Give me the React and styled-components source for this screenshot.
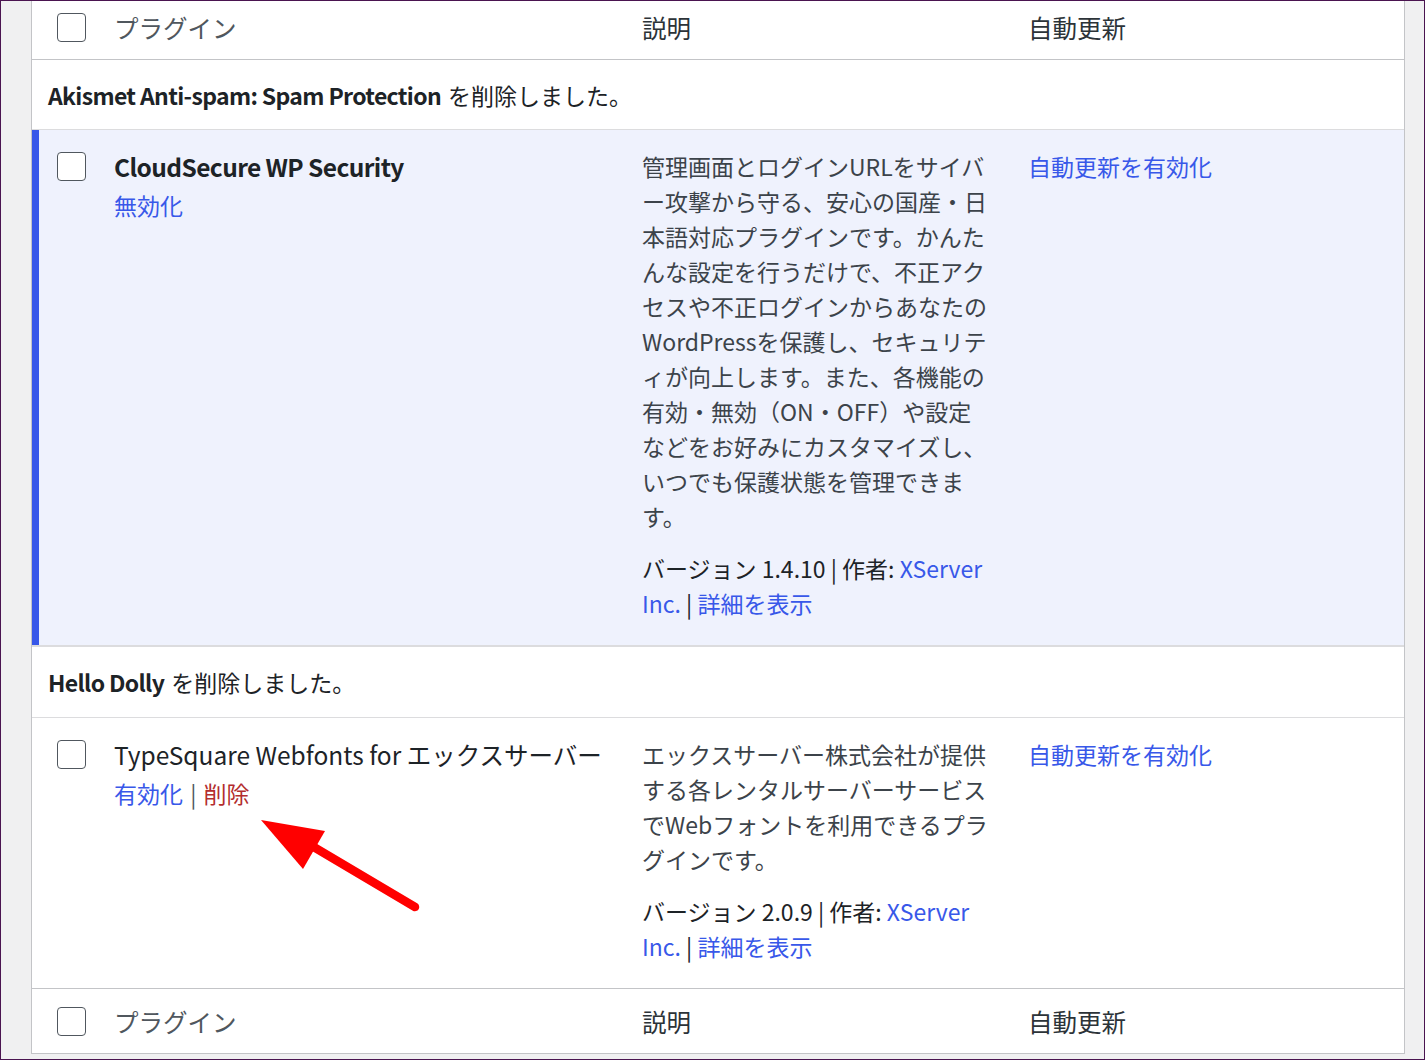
import styled, { createGlobalStyle } from 'styled-components';

const GlobalStyle = createGlobalStyle`
  html, body {
    margin: 0;
    padding: 0;
    background: #f0f0f1;
  }
  body {
    font-family: "Noto Sans CJK JP", "Noto Sans", sans-serif;
    color: #1d2327;
  }
`;

const Frame = styled.div`
  position: relative;
  box-sizing: border-box;
  width: 1425px;
  height: 1060px;
  border: 1px solid #4a1450;
  background: #f0f0f1;
  overflow: hidden;
  padding: 0 19px 0 30px;
`;

const Table = styled.div`
  background: #fff;
  border-left: 1px solid #c3c4c7;
  border-right: 1px solid #c3c4c7;
`;

const Row = styled.div`
  display: grid;
  grid-template-columns: 68px 528px 386px 1fr;
  background: ${(p) => (p.$active ? '#eff2fd' : '#fff')};
  border-bottom: ${(p) => p.$border || '1px solid #dcdcde'};
`;

const HeadRow = styled(Row)`
  box-sizing: border-box;
  height: ${(p) => p.$height}px;
  padding-bottom: ${(p) => p.$lift || 0}px;
  align-items: center;
`;

const CheckCell = styled.div`
  display: flex;
  align-items: ${(p) => (p.$top ? 'flex-start' : 'center')};
  padding-left: 25px;
  padding-top: ${(p) => p.$top || 0}px;
  box-shadow: ${(p) => (p.$active ? 'inset 7px 0 0 #3858e9' : 'none')};
`;

const Checkbox = styled.input.attrs({ type: 'checkbox' })`
  appearance: none;
  box-sizing: border-box;
  width: 29px;
  height: 29px;
  margin: 0;
  background: #fff;
  border: 1.5px solid #50575e;
  border-radius: 4px;
`;

const HeadCell = styled.div`
  padding-left: 14px;
  font-size: 24.5px;
  color: ${(p) => (p.$muted ? '#50575e' : '#2c3338')};
`;

const Cell = styled.div`
  padding: 19px 14px 24px;
  font-size: 23px;
  line-height: 35px;
`;

const Title = styled.div`
  font-size: 24.5px;
  font-weight: ${(p) => (p.$bold ? 700 : 400)};
  letter-spacing: ${(p) => (p.$bold ? '-0.6px' : '0')};
  color: #1d2327;
  white-space: nowrap;
`;

const Actions = styled.div`
  margin-top: 4px;
  color: #50575e;
`;

const Link = styled.span`
  color: ${(p) => (p.$danger ? '#b32d2e' : '#3858e9')};
`;

const Pipe = styled.span`
  margin: 0 ${(p) => p.$gap || 0}px;
`;

const Description = styled.div`
  color: #3c434a;
  white-space: nowrap;
  margin-bottom: 17px;
`;

const Meta = styled.div`
  color: #1d2327;
  white-space: nowrap;
`;

const NoticeRow = styled.div`
  height: ${(p) => p.$height}px;
  display: flex;
  align-items: center;
  padding-left: 16px;
  font-size: 23px;
  color: #1d2327;
  border-bottom: ${(p) => p.$border || '1px solid #dcdcde'};
  background: #fff;

  strong {
    font-weight: 700;
    letter-spacing: -0.65px;
    margin-right: 7px;
  }
`;

const Arrow = styled.svg`
  position: absolute;
  left: 0;
  top: 0;
  pointer-events: none;
`;

const Sep = ({ gap }) => <Pipe $gap={gap}> | </Pipe>;

const HeaderRow = ({ height, lift, border }) => (
  <HeadRow $height={height} $lift={lift} $border={border}>
    <CheckCell>
      <Checkbox />
    </CheckCell>
    <HeadCell $muted>プラグイン</HeadCell>
    <HeadCell>説明</HeadCell>
    <HeadCell>自動更新</HeadCell>
  </HeadRow>
);

const cloudSecureLines = [
  '管理画面とログインURLをサイバ',
  'ー攻撃から守る、安心の国産・日',
  '本語対応プラグインです。かんた',
  'んな設定を行うだけで、不正アク',
  'セスや不正ログインからあなたの',
  'WordPressを保護し、セキュリテ',
  'ィが向上します。また、各機能の',
  '有効・無効（ON・OFF）や設定',
  'などをお好みにカスタマイズし、',
  'いつでも保護状態を管理できま',
  'す。',
];

const typeSquareLines = [
  'エックスサーバー株式会社が提供',
  'する各レンタルサーバーサービス',
  'でWebフォントを利用できるプラ',
  'グインです。',
];

const PluginRow = ({ active, name, actions, lines, version, border }) => (
  <Row $active={active} $border={border}>
    <CheckCell $top={22} $active={active}>
      <Checkbox />
    </CheckCell>
    <Cell>
      <Title $bold={active}>{name}</Title>
      <Actions>{actions}</Actions>
    </Cell>
    <Cell>
      <Description>
        {lines.map((line) => (
          <div key={line}>{line}</div>
        ))}
      </Description>
      <Meta>
        バージョン {version}
        <Sep />
        作者: <Link>XServer</Link>
        <br />
        <Link>Inc.</Link>
        <Sep />
        <Link>詳細を表示</Link>
      </Meta>
    </Cell>
    <Cell>
      <Link>自動更新を有効化</Link>
    </Cell>
  </Row>
);

export default function App() {
  return (
    <>
      <GlobalStyle />
      <Frame>
        <Table>
          <HeaderRow height={59} lift={5} border="1px solid #c3c4c7" />
          <NoticeRow $height={69}>
            <strong>Akismet Anti-spam: Spam Protection</strong>を削除しました。
          </NoticeRow>
          <PluginRow
            active
            name="CloudSecure WP Security"
            actions={<Link>無効化</Link>}
            lines={cloudSecureLines}
            version="1.4.10"
            border="2px solid #dcdcde"
          />
          <NoticeRow $height={70}>
            <strong>Hello Dolly</strong>を削除しました。
          </NoticeRow>
          <PluginRow
            name="TypeSquare Webfonts for エックスサーバー"
            actions={
              <>
                <Link>有効化</Link>
                <Sep gap={2} />
                <Link $danger>削除</Link>
              </>
            }
            lines={typeSquareLines}
            version="2.0.9"
            border="1px solid #c3c4c7"
          />
          <HeaderRow height={65} border="1px solid #c3c4c7" />
        </Table>
        <Arrow width="1425" height="1060" viewBox="0 0 1425 1060">
          <line x1="306" y1="842" x2="414" y2="906" stroke="#ff0000" strokeWidth="8.5" strokeLinecap="round" />
          <polygon points="260,819 324,830 302,868" fill="#ff0000" />
        </Arrow>
      </Frame>
    </>
  );
}
